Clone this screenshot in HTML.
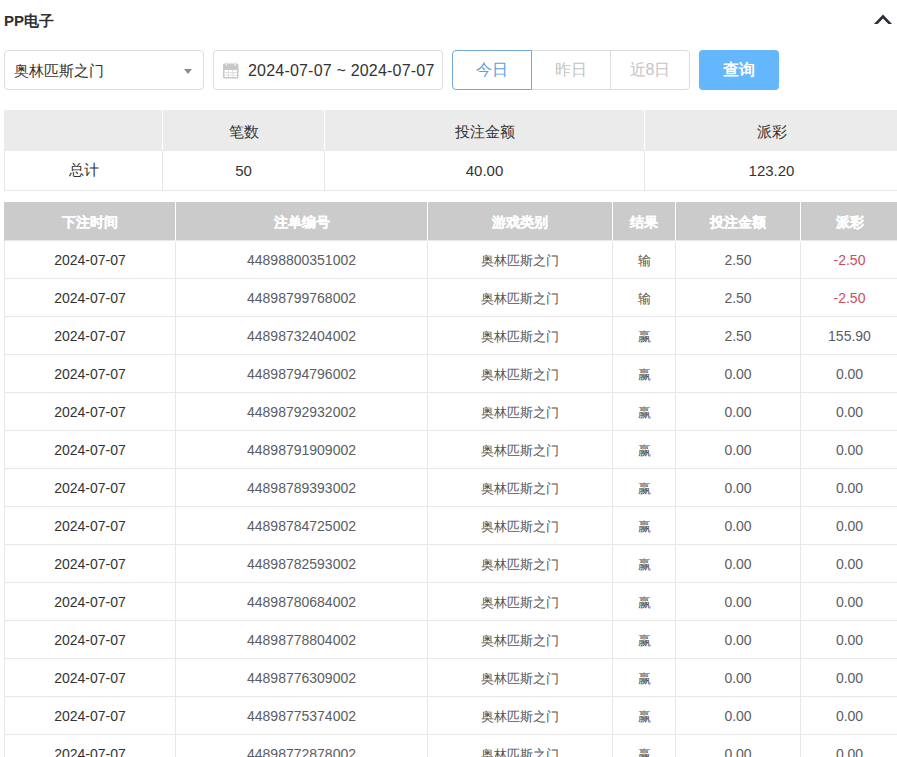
<!DOCTYPE html>
<html><head><meta charset="utf-8">
<style>
*{box-sizing:border-box;margin:0;padding:0}
html,body{width:897px;height:757px;overflow:hidden;background:#fff;font-family:"Liberation Sans",sans-serif;color:#333}
.title{position:absolute;left:4px;top:12px;font-size:15px;font-weight:bold;color:#303133}
.chev{position:absolute;left:870px;top:10px}
.sel{position:absolute;left:4px;top:50px;width:200px;height:40px;border:1px solid #dddddd;border-radius:4px;font-size:15px;line-height:38px;padding-left:9px;padding-top:1px;color:#333}
.caret{position:absolute;left:179px;top:18px;width:0;height:0;border-left:4px solid transparent;border-right:4px solid transparent;border-top:5px solid #8c8c8c}
.date{position:absolute;left:213px;top:50px;width:230px;height:40px;border:1px solid #dddddd;border-radius:4px;font-size:14px;line-height:38px;color:#333}
.date .txt{position:absolute;left:34px;top:1px;font-size:16px;letter-spacing:0.2px}
.cal{position:absolute;left:9px;top:11px}
.bg{position:absolute;left:452px;top:50px;width:238px;height:40px}
.b{position:absolute;top:0;height:40px;border:1px solid #dddddd;font-size:16px;line-height:38px;text-align:center;color:#c4c4c4}
.b1{left:0;width:80px;border-color:#74a9d8;color:#5a9fe0;border-radius:4px 0 0 4px;z-index:2;background:#fff}
.b2{left:79px;width:80px}
.b3{left:158px;width:80px;border-radius:0 4px 4px 0}
.q{position:absolute;left:699px;top:50px;width:80px;height:40px;border-radius:4px;background:#64b6fd;color:#fff;font-size:16px;font-weight:bold;line-height:40px;text-align:center}
table{border-collapse:collapse;table-layout:fixed;position:absolute;left:4px;font-size:14px}
.sum{top:110px;width:895px}
.sum td{height:40px;text-align:center;border:1px solid #e8e8e8;color:#333;font-size:15px}
.sum tr.h td{background:#ebebeb;border-color:#ebebeb;border-right-color:#fff;padding-top:4px}
.det{top:202px;width:895px}
.det th:first-child{border-left:1px solid #cbcbcb}
.det th{height:38px;background:#cbcbcb;color:#fff;font-weight:900;border-right:1px solid #fff;font-size:13.5px;padding-top:5px;-webkit-text-stroke:0.3px #fff}
.det td{height:38px;text-align:center;border:1px solid #e8e8e8;color:#333;font-size:14px}
.det td{padding-top:2px}
.det td.no,.det td.n,.det td.p{color:#5a5d63}
.det td.g{color:#555;font-size:13px;padding-top:4px}
.det td.red{color:#c94d62}
</style></head><body>
<div class="title">PP电子</div>
<svg class="chev" width="26" height="20" viewBox="0 0 26 20"><path d="M4 14 L13 4.6 L22 14 L18.4 14 L13 8.4 L7.6 14 Z" fill="#2b2f36"/></svg>
<div class="sel">奥林匹斯之门<span class="caret"></span></div>
<div class="date"><svg class="cal" width="16" height="17" viewBox="0 0 16 17"><rect x="0" y="1.5" width="15.5" height="15" rx="1.5" fill="#c8c8c8"/><rect x="1.5" y="8" width="12.5" height="7" fill="#fff"/><path d="M1.5 10.5H14M1.5 13H14M5.5 8V15M10 8V15" stroke="#dedede" stroke-width="1"/><rect x="2.5" y="0" width="2" height="4" rx="1" fill="#e6e6e6"/><rect x="11" y="0" width="2" height="4" rx="1" fill="#e6e6e6"/></svg><span class="txt">2024-07-07 ~ 2024-07-07</span></div>
<div class="bg"><div class="b b1">今日</div><div class="b b2">昨日</div><div class="b b3">近8日</div></div>
<div class="q">查询</div>
<table class="sum">
<colgroup><col style="width:158px"><col style="width:162px"><col style="width:320px"><col></colgroup>
<tr class="h"><td></td><td>笔数</td><td>投注金额</td><td>派彩</td></tr>
<tr><td>总计</td><td>50</td><td>40.00</td><td>123.20</td></tr>
</table>
<table class="det">
<colgroup><col style="width:171px"><col style="width:252px"><col style="width:185px"><col style="width:63px"><col style="width:125px"><col></colgroup>
<tr><th>下注时间</th><th>注单编号</th><th>游戏类别</th><th>结果</th><th>投注金额</th><th>派彩</th></tr>
<tr><td>2024-07-07</td><td class="no">44898800351002</td><td class="g">奥林匹斯之门</td><td class="g">输</td><td class="n">2.50</td><td class="red">-2.50</td></tr>
<tr><td>2024-07-07</td><td class="no">44898799768002</td><td class="g">奥林匹斯之门</td><td class="g">输</td><td class="n">2.50</td><td class="red">-2.50</td></tr>
<tr><td>2024-07-07</td><td class="no">44898732404002</td><td class="g">奥林匹斯之门</td><td class="g">赢</td><td class="n">2.50</td><td class="p">155.90</td></tr>
<tr><td>2024-07-07</td><td class="no">44898794796002</td><td class="g">奥林匹斯之门</td><td class="g">赢</td><td class="n">0.00</td><td class="p">0.00</td></tr>
<tr><td>2024-07-07</td><td class="no">44898792932002</td><td class="g">奥林匹斯之门</td><td class="g">赢</td><td class="n">0.00</td><td class="p">0.00</td></tr>
<tr><td>2024-07-07</td><td class="no">44898791909002</td><td class="g">奥林匹斯之门</td><td class="g">赢</td><td class="n">0.00</td><td class="p">0.00</td></tr>
<tr><td>2024-07-07</td><td class="no">44898789393002</td><td class="g">奥林匹斯之门</td><td class="g">赢</td><td class="n">0.00</td><td class="p">0.00</td></tr>
<tr><td>2024-07-07</td><td class="no">44898784725002</td><td class="g">奥林匹斯之门</td><td class="g">赢</td><td class="n">0.00</td><td class="p">0.00</td></tr>
<tr><td>2024-07-07</td><td class="no">44898782593002</td><td class="g">奥林匹斯之门</td><td class="g">赢</td><td class="n">0.00</td><td class="p">0.00</td></tr>
<tr><td>2024-07-07</td><td class="no">44898780684002</td><td class="g">奥林匹斯之门</td><td class="g">赢</td><td class="n">0.00</td><td class="p">0.00</td></tr>
<tr><td>2024-07-07</td><td class="no">44898778804002</td><td class="g">奥林匹斯之门</td><td class="g">赢</td><td class="n">0.00</td><td class="p">0.00</td></tr>
<tr><td>2024-07-07</td><td class="no">44898776309002</td><td class="g">奥林匹斯之门</td><td class="g">赢</td><td class="n">0.00</td><td class="p">0.00</td></tr>
<tr><td>2024-07-07</td><td class="no">44898775374002</td><td class="g">奥林匹斯之门</td><td class="g">赢</td><td class="n">0.00</td><td class="p">0.00</td></tr>
<tr><td>2024-07-07</td><td class="no">44898772878002</td><td class="g">奥林匹斯之门</td><td class="g">赢</td><td class="n">0.00</td><td class="p">0.00</td></tr>
</table>
</body></html>
